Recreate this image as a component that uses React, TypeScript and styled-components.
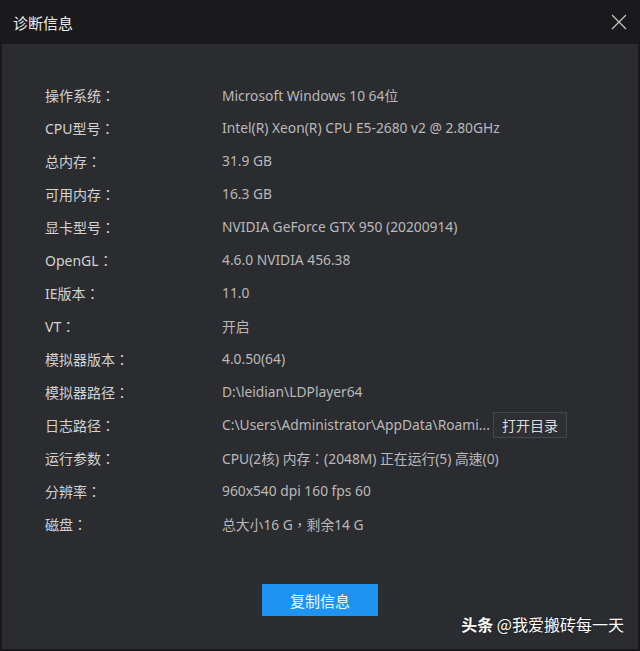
import React from "react";
import styled, { createGlobalStyle } from "styled-components";

const Global = createGlobalStyle`
  html, body { margin: 0; padding: 0; background: #1a1a1c; }
  body { font-family: "Noto Sans", "Noto Sans CJK SC", sans-serif; }
`;

const Window = styled.div`
  position: relative;
  width: 640px;
  height: 651px;
  box-sizing: border-box;
  border: 2px solid #19191b;
  border-top: 0;
  background: #2b2c30;
  display: flex;
  flex-direction: column;
  overflow: hidden;
`;

const TitleBar = styled.div`
  height: 44px;
  flex: 0 0 44px;
  background: #1a1a1c;
  display: flex;
  align-items: center;
  justify-content: space-between;
  padding: 0 13px 0 13px;
  margin: 0 -2px;
`;

const Title = styled.div`
  color: #ececec;
  font-size: 15px;
  font-family: "Noto Sans CJK SC", sans-serif;
`;

const CloseBtn = styled.div`
  width: 16px;
  height: 16px;
  display: flex;
`;

const Body = styled.div`
  flex: 1;
  display: flex;
  flex-direction: column;
  padding: 34px 0 0 43px;
`;

const Row = styled.div`
  height: 33px;
  display: flex;
  align-items: center;
  font-size: 14px;
`;

const Label = styled.div`
  width: 177px;
  color: #d2d2d2;
  font-family: "Noto Sans", "Noto Sans CJK SC", sans-serif;
`;

const Colon = styled.span`
  font-family: "Noto Sans CJK TC", sans-serif;
`;

const Value = styled.div`
  color: #b9b9b9;
  font-size: 13.8px;
  font-family: "Noto Sans", "Noto Sans CJK TC", sans-serif;
  white-space: nowrap;
`;

const SmallButton = styled.div`
  margin-left: 3px;
  width: 74px;
  height: 26px;
  box-sizing: border-box;
  border: 1px solid #46474b;
  background: #2e2f33;
  color: #dcdcdc;
  font-size: 14px;
  font-family: "Noto Sans CJK SC", sans-serif;
  display: flex;
  align-items: center;
  justify-content: center;
`;

const Footer = styled.div`
  display: flex;
  justify-content: center;
  margin-top: 44px;
  padding-right: 43px;
`;

const PrimaryButton = styled.div`
  width: 116px;
  height: 32px;
  background: #1f93f2;
  color: #f2f7ff;
  font-size: 15px;
  font-family: "Noto Sans CJK SC", sans-serif;
  display: flex;
  align-items: center;
  justify-content: center;
`;

const Watermark = styled.div`
  position: absolute;
  right: 14px;
  bottom: 13px;
  color: #ffffff;
  font-size: 16px;
  font-family: "Noto Sans CJK SC", sans-serif;
  text-shadow: 0 0 2px rgba(0,0,0,0.6);
  white-space: nowrap;
  b { font-weight: 700; }
`;

const rows: [string, string][] = [
  ["操作系统", "Microsoft Windows 10 64位"],
  ["CPU型号", "Intel(R) Xeon(R) CPU E5-2680 v2 @ 2.80GHz"],
  ["总内存", "31.9 GB"],
  ["可用内存", "16.3 GB"],
  ["显卡型号", "NVIDIA GeForce GTX 950 (20200914)"],
  ["OpenGL", "4.6.0 NVIDIA 456.38"],
  ["IE版本", "11.0"],
  ["VT", "开启"],
  ["模拟器版本", "4.0.50(64)"],
  ["模拟器路径", "D:\\leidian\\LDPlayer64"],
  ["日志路径", "C:\\Users\\Administrator\\AppData\\Roami..."],
  ["运行参数", "CPU(2核) 内存：(2048M) 正在运行(5) 高速(0)"],
  ["分辨率", "960x540 dpi 160 fps 60"],
  ["磁盘", "总大小16 G，剩余14 G"],
];

export default function App() {
  return (
    <>
      <Global />
      <Window>
        <TitleBar>
          <Title>诊断信息</Title>
          <CloseBtn>
            <svg width="16" height="16" viewBox="0 0 16 16">
              <path d="M1 1 L15 15 M15 1 L1 15" stroke="#c8c8c8" strokeWidth="1.2" fill="none" />
            </svg>
          </CloseBtn>
        </TitleBar>
        <Body>
          {rows.map(([l, v], i) => (
            <Row key={i}>
              <Label>
                {l}
                <Colon>：</Colon>
              </Label>
              <Value>{v}</Value>
              {i === 10 && <SmallButton>打开目录</SmallButton>}
            </Row>
          ))}
          <Footer>
            <PrimaryButton>复制信息</PrimaryButton>
          </Footer>
        </Body>
        <Watermark><b>头条</b> @我爱搬砖每一天</Watermark>
      </Window>
    </>
  );
}
